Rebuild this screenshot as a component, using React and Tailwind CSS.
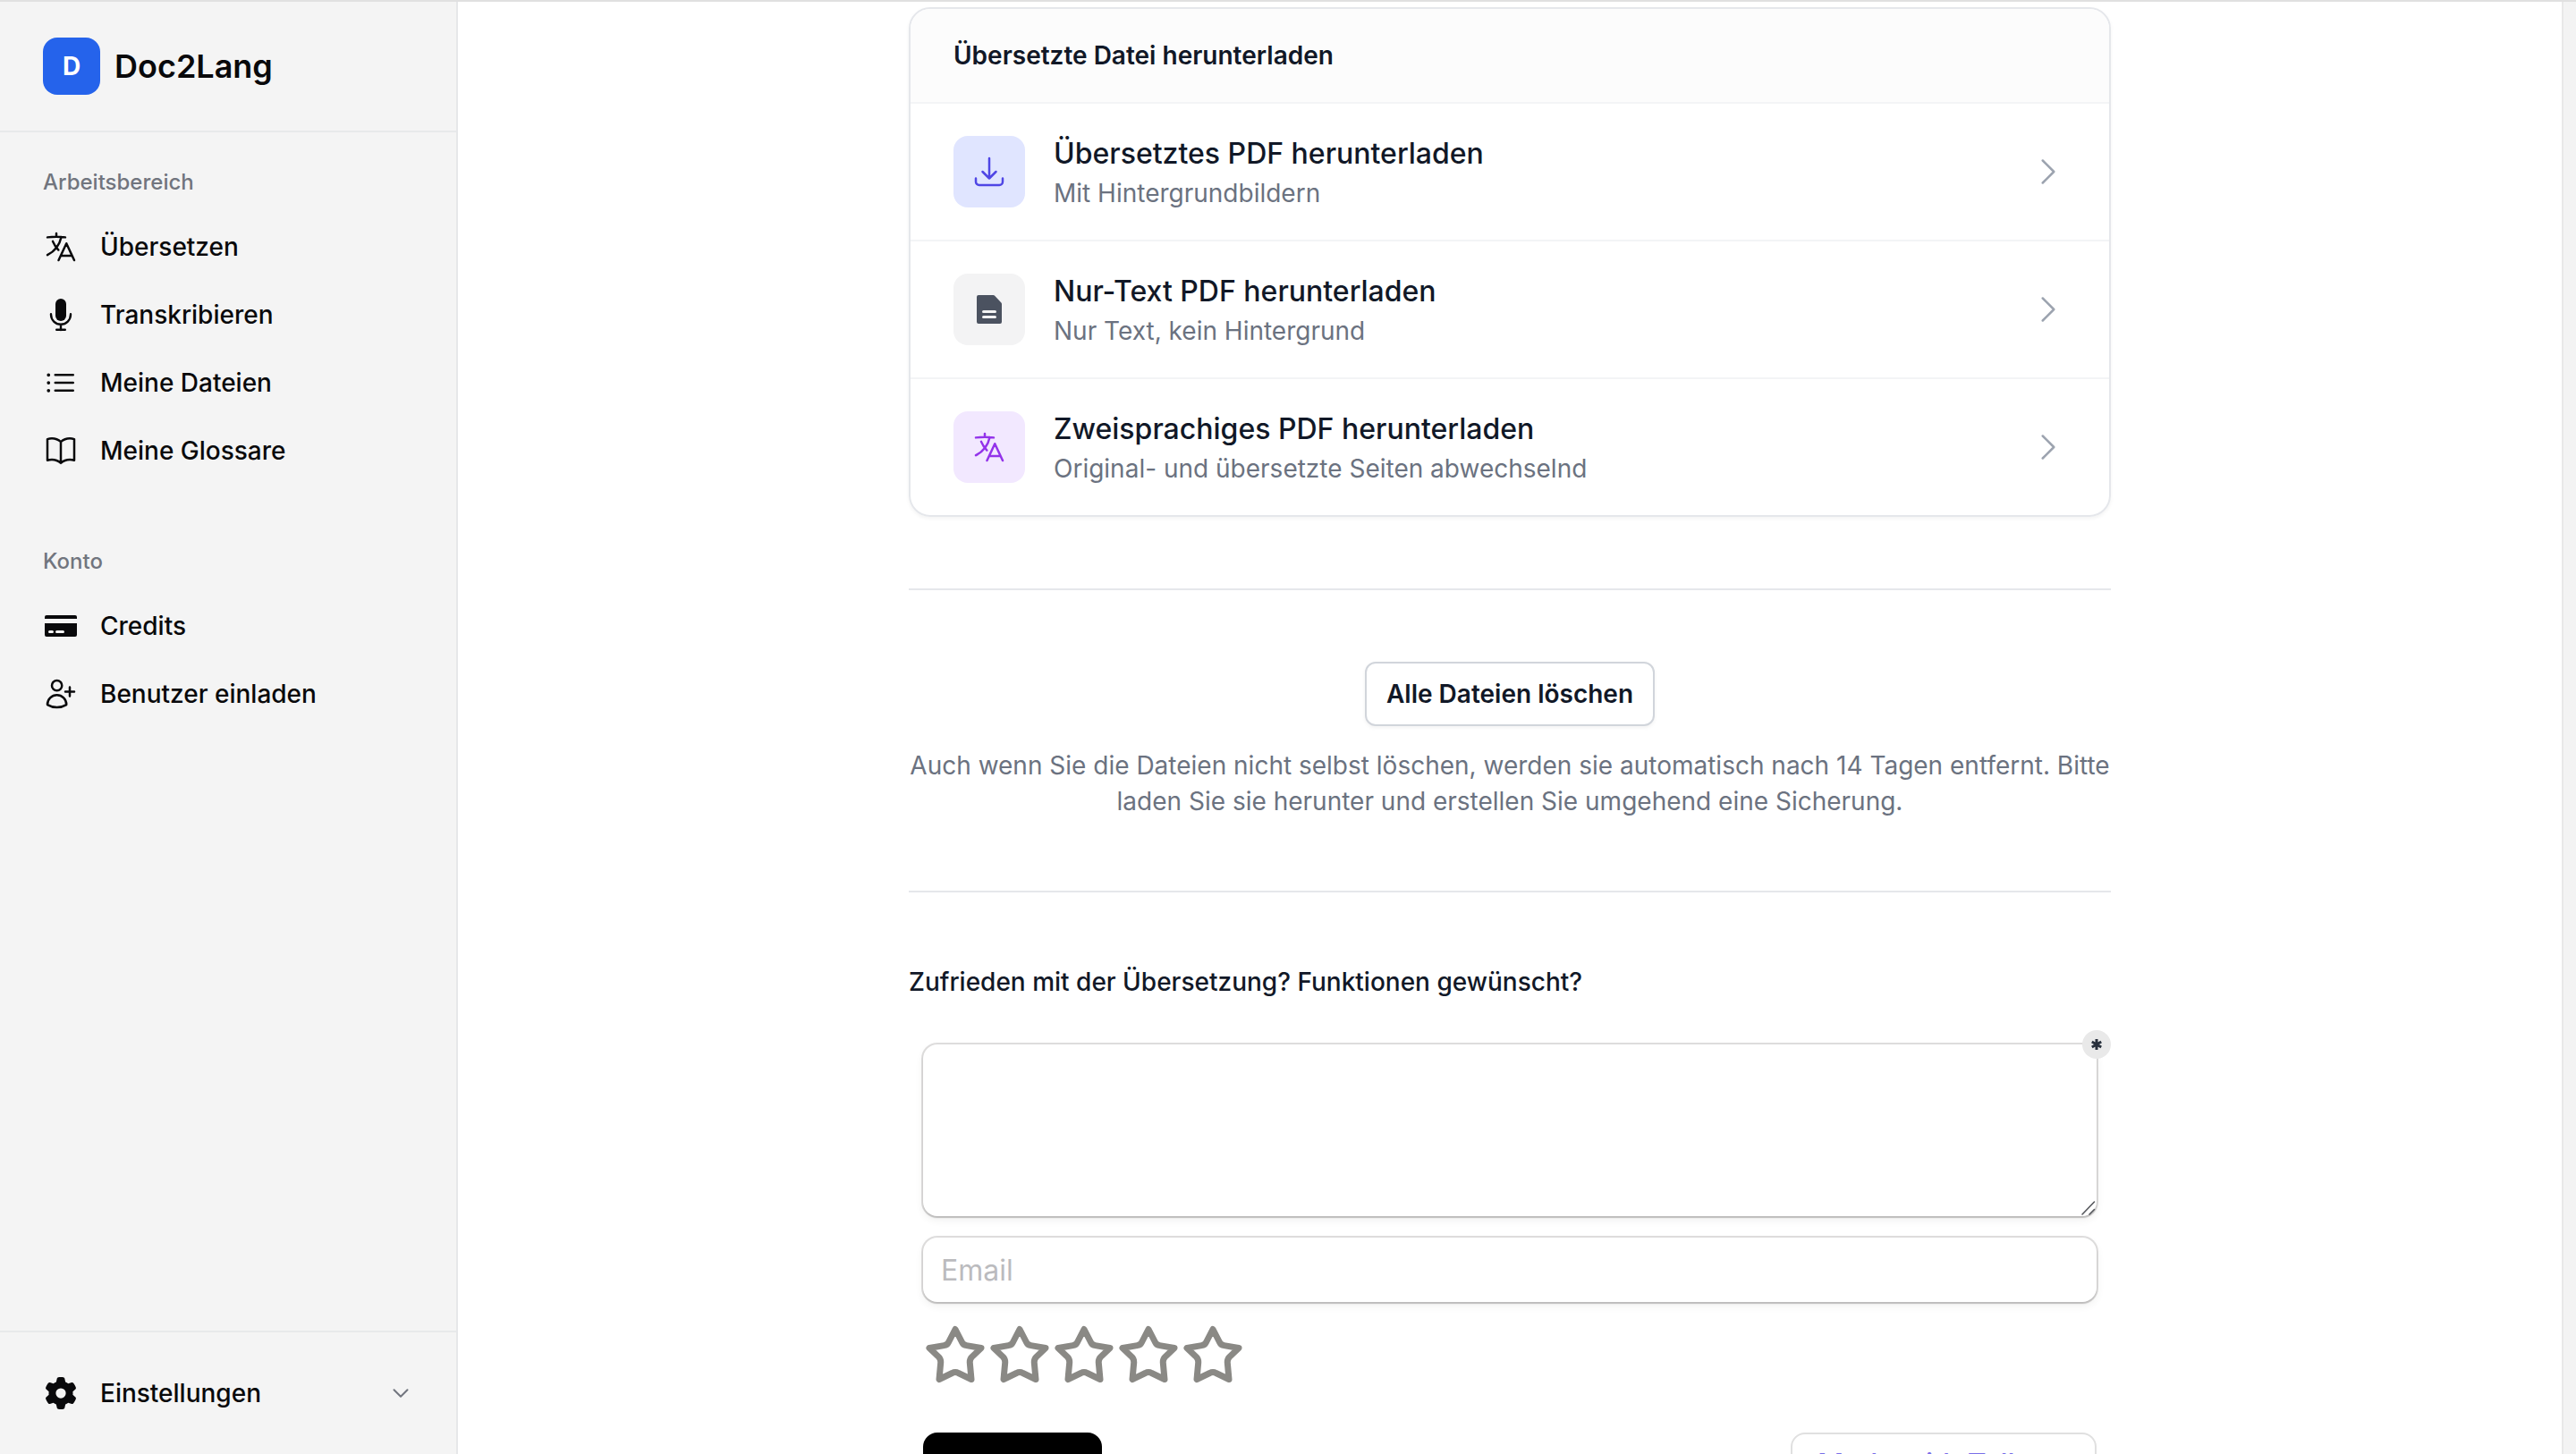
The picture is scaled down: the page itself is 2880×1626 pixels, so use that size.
import {
  HiOutlineLanguage,
  HiOutlineListBullet,
  HiOutlineBookOpen,
  HiOutlineUserPlus,
  HiOutlineArrowDownTray,
  HiOutlineChevronRight,
  HiOutlineChevronDown,
} from "react-icons/hi2";
import { FaGear } from "react-icons/fa6";

function MicrophoneIcon({ className }) {
  return (
    <svg viewBox="0 0 40 40" className={className} fill="none" stroke="currentColor" strokeWidth="2.4" strokeLinecap="round" aria-hidden="true">
      <rect x="14" y="2" width="12" height="25" rx="6" fill="currentColor" stroke="none" />
      <path d="M9 19.2v.6a11 11 0 0 0 22 0v-.6M20 31v6M15.2 36.8h9.6" />
    </svg>
  );
}

function CardIcon({ className }) {
  return (
    <svg viewBox="0 0 40 40" className={className} fill="currentColor" aria-hidden="true">
      <path d="M4 8h32a2 2 0 0 1 2 2v2H2v-2a2 2 0 0 1 2-2Z" />
      <path
        fillRule="evenodd"
        d="M2 17h36v13a2 2 0 0 1-2 2H4a2 2 0 0 1-2-2V17Zm5.5 8a1.5 1.5 0 0 0 0 3h3a1.5 1.5 0 0 0 0-3h-3Zm8 0a1.5 1.5 0 0 0 0 3h7a1.5 1.5 0 0 0 0-3h-7Z"
      />
    </svg>
  );
}

function DocumentIcon({ className }) {
  return (
    <svg viewBox="0 0 40 40" className={className} fill="currentColor" aria-hidden="true">
      <path
        fillRule="evenodd"
        d="M8 4h16.5a2 2 0 0 1 1.4.6l7.5 8a2 2 0 0 1 .6 1.4v20a2 2 0 0 1-2 2H8a2 2 0 0 1-2-2V6a2 2 0 0 1 2-2Zm5.5 17a1.5 1.5 0 0 0 0 3h13a1.5 1.5 0 0 0 0-3h-13Zm0 6a1.5 1.5 0 0 0 0 3h13a1.5 1.5 0 0 0 0-3h-13Z"
      />
    </svg>
  );
}

function StarIcon() {
  return (
    <svg viewBox="0 0 72 72" className="size-[72px]" fill="none" stroke="currentColor" strokeWidth="7" strokeLinejoin="round" aria-hidden="true">
      <path d="M36 8.5 43.5 23Q45 26.2 48.5 26.6L65 29.5 54.5 39.5Q52 42 52.3 46L54 64.5 39.5 57.5Q36 55.5 32.5 57.5L18 64.5 19.7 46Q20 42 17.5 39.5L7 29.5 23.5 26.6Q27 26.2 28.5 23Z" />
    </svg>
  );
}

function AsteriskIcon() {
  return (
    <svg viewBox="0 0 12 12" className="size-3" fill="none" stroke="currentColor" strokeWidth="3" aria-hidden="true">
      <path d="M6 0v12M.8 3l10.4 6M.8 9l10.4-6" />
    </svg>
  );
}

function ResizeGrip() {
  return (
    <svg viewBox="0 0 18 18" className="pointer-events-none absolute right-0 bottom-0 size-[18px]" fill="none" stroke="#55575c" strokeWidth="1.6" strokeLinecap="round" aria-hidden="true">
      <path d="M2 16 15.5 2M10 16l5.500-5.500" />
    </svg>
  );
}

function NavSection({ title, items }) {
  return (
    <section>
      <h2 className="mb-[18px] text-[24px] leading-8 font-medium text-[#71757e]">{title}</h2>
      <ul>
        {items.map(({ label, Icon }) => (
          <li key={label}>
            <a href="#" className="flex items-center gap-6 py-[18px] text-[28px] leading-10 font-medium">
              <Icon className="size-10 shrink-0" />
              {label}
            </a>
          </li>
        ))}
      </ul>
    </section>
  );
}

const workspace = [
  { label: "Übersetzen", Icon: HiOutlineLanguage },
  { label: "Transkribieren", Icon: MicrophoneIcon },
  { label: "Meine Dateien", Icon: HiOutlineListBullet },
  { label: "Meine Glossare", Icon: HiOutlineBookOpen },
];

const account = [
  { label: "Credits", Icon: CardIcon },
  { label: "Benutzer einladen", Icon: HiOutlineUserPlus },
];

const downloads = [
  {
    title: "Übersetztes PDF herunterladen",
    note: "Mit Hintergrundbildern",
    Icon: HiOutlineArrowDownTray,
    tile: "bg-[#e0e5ff] text-[#4f46e5]",
  },
  {
    title: "Nur-Text PDF herunterladen",
    note: "Nur Text, kein Hintergrund",
    Icon: DocumentIcon,
    tile: "bg-[#f3f3f4] text-[#4b5260]",
  },
  {
    title: "Zweisprachiges PDF herunterladen",
    note: "Original- und übersetzte Seiten abwechselnd",
    Icon: HiOutlineLanguage,
    tile: "bg-[#f2e8ff] text-[#9333ea]",
  },
];

const fieldStyle =
  "block w-full rounded-2xl bg-white px-5 text-[32px] outline-none shadow-[0_2px_2px_0_rgba(0,0,0,0.12),0_0_0_2px_rgba(61,59,53,0.16),0_4px_10px_0_rgba(61,59,53,0.08)]";

function Sidebar() {
  return (
    <aside className="flex w-[512px] shrink-0 flex-col border-r-2 border-[#e6e7e9] bg-[#f4f4f4] text-[#09090b]">
      <div className="flex items-center gap-4 border-b-2 border-[#e8e9ea] px-12 py-10">
        <span className="flex size-16 items-center justify-center rounded-2xl bg-[#2563eb] text-[28px] font-bold text-white">D</span>
        <span className="text-[36px] leading-10 font-semibold">Doc2Lang</span>
      </div>
      <nav className="flex flex-1 flex-col gap-[70px] px-12 pt-10">
        <NavSection title="Arbeitsbereich" items={workspace} />
        <NavSection title="Konto" items={account} />
      </nav>
      <div className="border-t-2 border-[#e8e9ea] py-12 pr-[50px] pl-12">
        <button type="button" className="flex w-full items-center gap-6 text-[28px] leading-10 font-medium">
          <span className="flex size-10 items-center justify-center">
            <FaGear className="size-9" />
          </span>
          Einstellungen
          <HiOutlineChevronDown className="ml-auto size-6 stroke-2 text-[#71757e]" />
        </button>
      </div>
    </aside>
  );
}

function DownloadCard() {
  return (
    <section className="overflow-hidden rounded-3xl border-2 border-[#e5e7eb] shadow-[0_2px_4px_0_rgba(0,0,0,0.05)]">
      <h2 className="border-b-2 border-[#f3f4f6] bg-[#fcfcfc] px-12 py-8 text-[28px] leading-10 font-semibold">
        Übersetzte Datei herunterladen
      </h2>
      <ul className="divide-y-2 divide-[#f3f4f6]">
        {downloads.map(({ title, note, Icon, tile }) => (
          <li key={title}>
            <button type="button" className="flex w-full items-center gap-8 px-12 py-8 text-left">
              <span className={`flex size-20 shrink-0 items-center justify-center rounded-2xl ${tile}`}>
                <Icon className="size-10" />
              </span>
              <span className="flex flex-1 flex-col">
                <span className="text-[32px] leading-[48px] font-medium">{title}</span>
                <span className="text-[28px] leading-10 text-[#6b7280]">{note}</span>
              </span>
              <HiOutlineChevronRight className="size-10 text-[#9ca3af]" />
            </button>
          </li>
        ))}
      </ul>
    </section>
  );
}

function FeedbackForm() {
  return (
    <form className="px-4 pt-[50px]" onSubmit={(e) => e.preventDefault()}>
      <div className="relative">
        <textarea aria-label="Feedback" required className={`${fieldStyle} h-48 resize-none py-4`} />
        <ResizeGrip />
        <span className="absolute -top-4 -right-4 flex size-8 items-center justify-center rounded-full bg-[#e9e9e9] text-[#28303c]">
          <AsteriskIcon />
        </span>
      </div>
      <input type="email" aria-label="Email" placeholder="Email" className={`${fieldStyle} mt-6 h-[72px] placeholder:text-[#bbbbbe]`} />
      <div className="mt-[22px] flex text-[#8a8985]">
        {[1, 2, 3, 4, 5].map((n) => (
          <button key={n} type="button" aria-label={`${n} von 5 Sternen`}>
            <StarIcon />
          </button>
        ))}
      </div>
      <div className="mt-[52px] flex items-start justify-between">
        <button type="submit" aria-label="Absenden" className="h-[72px] w-[200px] rounded-2xl bg-black" />
        <a
          href="#"
          className="flex h-[72px] w-[342px] items-center rounded-2xl border-2 border-[#e0e0e0] px-7 text-[32px] font-medium whitespace-nowrap text-[#7a6fe8]"
        >
          Made with Tally
        </a>
      </div>
    </form>
  );
}

export default function App() {
  return (
    <div className="flex h-screen overflow-hidden border-t-2 border-[#e0e0e0] bg-white font-['Inter',sans-serif] text-[#111827]">
      <Sidebar />
      <main className="min-w-0 flex-1 overflow-hidden px-12 pt-[6px]">
        <div className="mx-auto w-full max-w-[1344px]">
          <DownloadCard />
          <section className="my-20 border-y-2 border-[#e5e7eb] py-20 text-center">
            <button
              type="button"
              className="rounded-xl border-2 border-[#d1d5db] bg-white px-[22px] py-[14px] text-[28px] leading-10 font-semibold shadow-[0_2px_4px_0_rgba(0,0,0,0.05)]"
            >
              Alle Dateien löschen
            </button>
            <p className="mt-6 text-[28px] leading-10 text-[#6b7280]">
              Auch wenn Sie die Dateien nicht selbst löschen, werden sie automatisch nach 14 Tagen entfernt. Bitte laden Sie sie herunter und erstellen Sie umgehend eine Sicherung.
            </p>
          </section>
          <h2 className="text-[28px] leading-10 font-medium">Zufrieden mit der Übersetzung? Funktionen gewünscht?</h2>
          <FeedbackForm />
        </div>
      </main>
      <div className="w-4 shrink-0 border-l-2 border-[#e8e8e8] bg-[#f3f3f3]" />
    </div>
  );
}
